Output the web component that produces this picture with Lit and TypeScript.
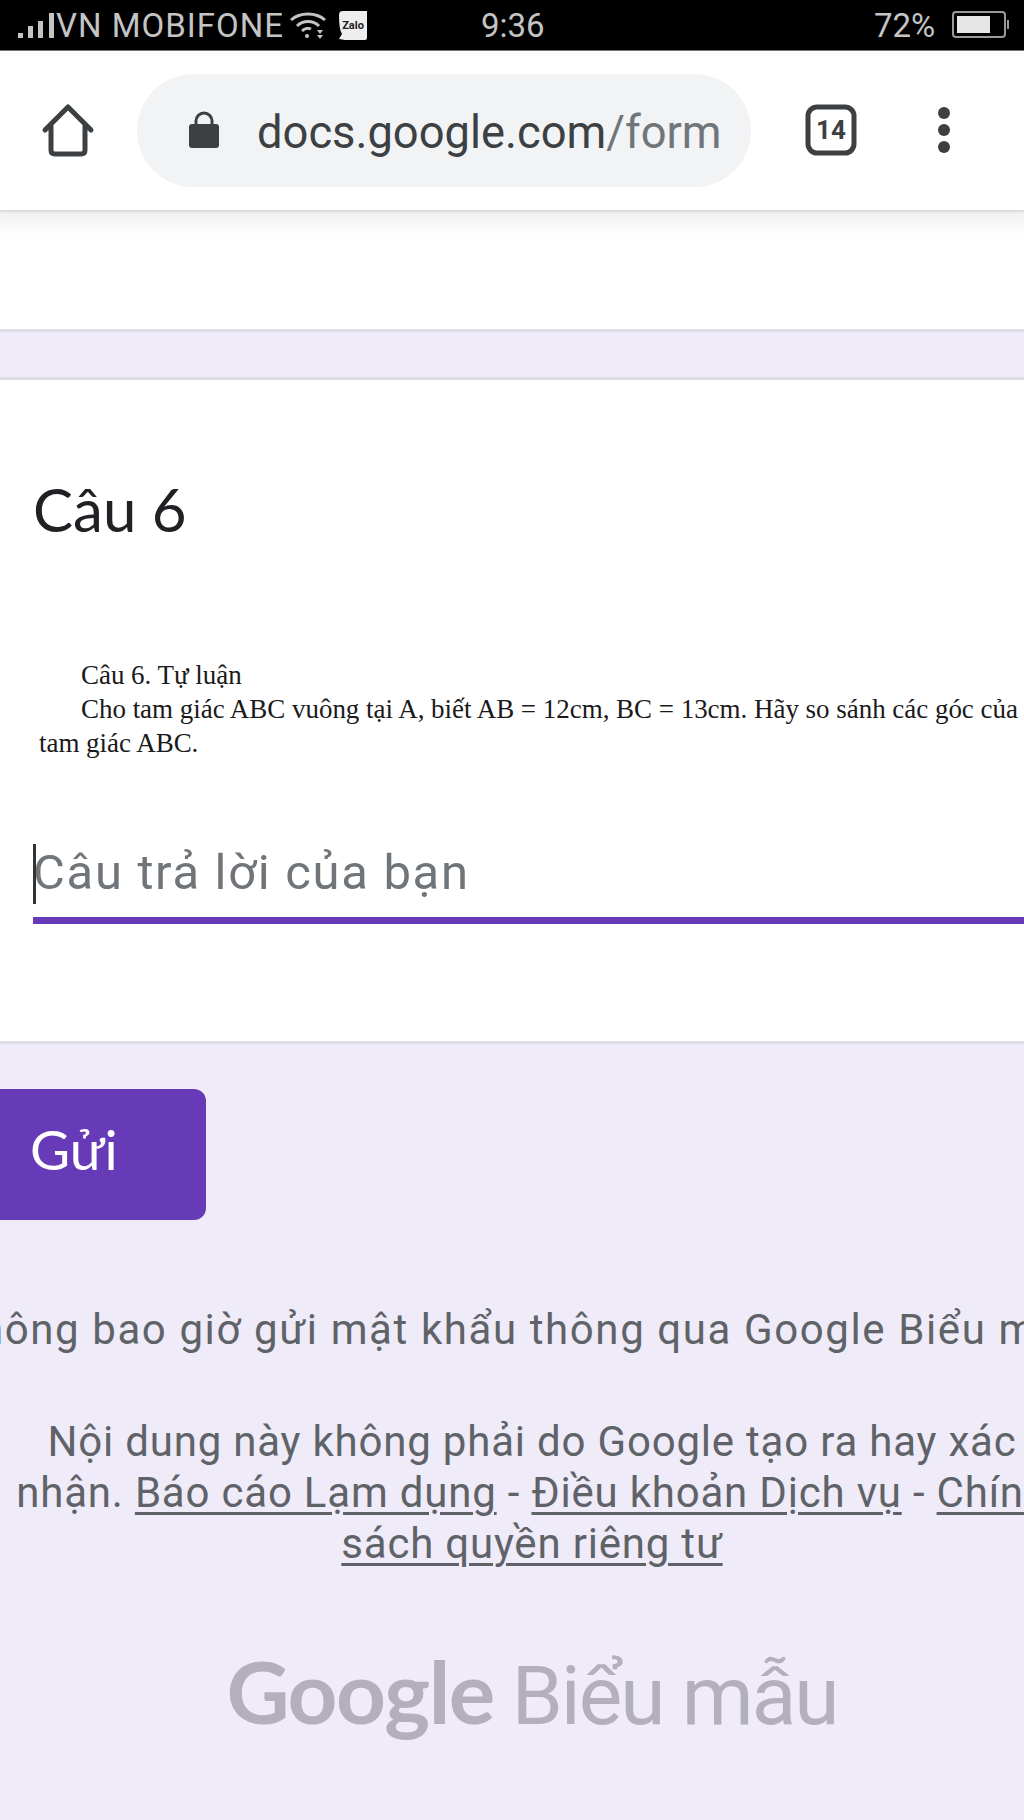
import {LitElement, html, css} from 'lit';
import {customElement} from 'lit/decorators.js';

@customElement('app-root')
export class AppRoot extends LitElement {
  static styles = css`
    :host {
      display: block;
      width: 1024px;
      height: 1820px;
      overflow: hidden;
      background: #efebf9;
      font-family: Roboto, "Noto Sans", sans-serif;
    }
    .status {
      height: 51px;
      background: #000;
      color: #c4c4c4;
      display: flex;
      align-items: center;
      font-size: 33px;
      line-height: 51px;
      border-bottom: 1px solid #777;
      box-sizing: border-box;
      padding-left: 17px;
    }
    .status svg { display: block; flex: none; }
    .carrier { width: 232px; margin-left: -2px; padding-right: 2px; white-space: nowrap; letter-spacing: 1px; }
    .zalo { margin-left: 12px; }
    .time { margin-left: 113px; width: 393px; }
    .pct { width: 78px; }
    .toolbar {
      height: 159px;
      background: #fff;
      display: flex;
      align-items: center;
      color: #3c4043;
      box-shadow: 0 2px 2px #d8d8d8;
      position: relative;
      box-sizing: border-box;
      padding: 0 0 1px 41px;
    }
    .toolbar svg { display: block; flex: none; }
    .pill {
      width: 614px;
      height: 113px;
      margin-left: 42px;
      border-radius: 57px;
      background: #f1f3f4;
      display: flex;
      align-items: center;
      box-sizing: border-box;
      padding-left: 52px;
      font-size: 45.3px;
      white-space: nowrap;
      overflow: hidden;
    }
    .url { margin-left: 38px; padding-top: 4px; }
    .url span { color: #70757a; }
    .tabs { margin-left: 54px; }
    .dots { margin-left: 80px; }
    .fade {
      height: 119px;
      background: linear-gradient(#f0f0f0, #fff 26px);
      border-bottom: 3px solid #dfdce8;
    }
    .band { height: 45px; }
    .card {
      background: #fff;
      border-top: 3px solid #dfdce8;
      border-bottom: 3px solid #dfdce8;
      height: 667px;
      box-sizing: border-box;
      padding: 96px 0 0 33px;
    }
    .title {
      font-family: Lato, "Noto Sans", sans-serif;
      font-size: 60px;
      line-height: 66px;
      color: #202124;
    }
    .doc {
      margin: 116px 0 0 6px;
      font-family: "Liberation Serif", serif;
      font-size: 27px;
      line-height: 34px;
      color: #1a1a1a;
      white-space: nowrap;
      letter-spacing: -0.03px;
    }
    .doc div:not(:last-child) { text-indent: 42px; }
    .answer {
      margin-top: 81px;
      height: 83px;
      padding-top: 1px;
      font-size: 49px;
      line-height: 62px;
      color: #70757a;
      letter-spacing: 1.67px;
      border-bottom: 7px solid #673ab7;
      box-sizing: border-box;
      position: relative;
    }
    .answer i {
      position: absolute;
      left: 0;
      top: 3px;
      width: 3px;
      height: 60px;
      background: #333;
    }
    .send {
      width: 206px;
      height: 131px;
      margin-top: 45px;
      background: #673ab7;
      border-radius: 0 12px 12px 0;
      color: #fff;
      font-family: Lato, "Noto Sans", sans-serif;
      font-size: 55px;
      line-height: 121px;
      box-sizing: border-box;
      padding-left: 30px;
    }
    .foot {
      width: 1064px;
      text-align: center;
      color: #5f6368;
      font-size: 42px;
      letter-spacing: 0.8px;
      white-space: nowrap;
    }
    .warn { margin: 84px 0 0 -48px; width: 1200px; text-align: left; line-height: 52px; letter-spacing: 1.6px; }
    .legal { margin-top: 60px; line-height: 51px; }
    .legal u { text-underline-offset: 5px; text-decoration-thickness: 3px; }
    .brand {
      width: 1064px;
      margin-top: 72px;
      display: flex;
      justify-content: center;
      align-items: baseline;
      color: #b3b0bb;
      line-height: 100px;
      white-space: nowrap;
    }
    .g { font-family: Lato, "Noto Sans", sans-serif; font-weight: 700; font-size: 87px; letter-spacing: -1.5px; }
    .f { margin-left: 18px; font-size: 82px; letter-spacing: -2px; }
  `;

  override render() {
    return html`
      <div class="status">
        <svg width="41" height="28" viewBox="0 0 41 28" fill="#c4c4c4">
          <rect x="1" y="22" width="5" height="5"/><rect x="11" y="15" width="5" height="12"/>
          <rect x="21" y="10" width="5" height="17"/><rect x="32" y="2" width="5" height="25"/>
        </svg>
        <span class="carrier">VN MOBIFONE</span>
        <svg width="36" height="30" viewBox="0 0 36 30" fill="none" stroke="#c4c4c4" stroke-width="3">
          <path d="M1 10C10 2 26 2 35 10"/><path d="M7 16C13 10 23 10 29 16"/><path d="M12 21C15 18 19 18 21 19"/>
          <circle cx="17" cy="26" r="2" fill="#c4c4c4" stroke="none"/>
          <path d="M27 20H33L30 24ZM27 25H33L30 29Z" fill="#c4c4c4" stroke="none"/>
        </svg>
        <svg class="zalo" width="30" height="31" viewBox="0 0 30 31">
          <path d="M5 1H29V28Q29 30 27 30H7L1 29L4 24Q1 20 1 5Q1 1 5 1Z" fill="#eee"/>
          <text x="15" y="19" font-size="11" font-family="Roboto" font-weight="700" text-anchor="middle" fill="#222">Zalo</text>
        </svg>
        <span class="time">9:36</span>
        <span class="pct">72%</span>
        <svg width="57" height="28" viewBox="0 0 57 28">
          <rect x="1" y="1" width="52" height="25" rx="3" fill="none" stroke="#999" stroke-width="2"/>
          <rect x="5" y="5" width="33" height="17" fill="#e6e6e6"/>
          <rect x="55" y="9" width="2" height="9" fill="#999"/>
        </svg>
      </div>
      <div class="toolbar">
        <svg width="54" height="54" viewBox="0 0 54 54" fill="none" stroke="#3c4043" stroke-width="5" stroke-linejoin="round" stroke-linecap="round">
          <path d="M4 27L27 4L50 27M10 21V47Q10 51 14 51H40Q44 51 44 47V21"/>
        </svg>
        <div class="pill">
          <svg width="30" height="38" viewBox="0 0 30 38" fill="#3c4043">
            <path d="M7 14V10a8 8 0 0 1 16 0v4" fill="none" stroke="#3c4043" stroke-width="3"/>
            <rect y="13" width="30" height="24" rx="3"/>
          </svg>
          <div class="url">docs.google.com<span>/form</span></div>
        </div>
        <svg class="tabs" width="52" height="52" viewBox="0 0 52 52">
          <rect x="3" y="3" width="46" height="46" rx="9" fill="none" stroke="#3c4043" stroke-width="5"/>
          <text x="26" y="35" font-size="26" font-family="Roboto" font-weight="700" text-anchor="middle" fill="#3c4043">14</text>
        </svg>
        <svg class="dots" width="14" height="46" viewBox="0 0 14 46" fill="#3c4043">
          <circle cx="7" cy="6" r="6"/><circle cx="7" cy="23" r="6"/><circle cx="7" cy="40" r="6"/>
        </svg>
      </div>
      <div class="fade"></div>
      <div class="band"></div>
      <div class="card">
        <div class="title">Câu 6</div>
        <div class="doc">
          <div>Câu 6. Tự luận</div>
          <div>Cho tam giác ABC vuông tại A, biết AB = 12cm, BC = 13cm. Hãy so sánh các góc của</div>
          <div>tam giác ABC.</div>
        </div>
        <div class="answer"><i></i>Câu trả lời của bạn</div>
      </div>
      <div class="send">Gửi</div>
      <div class="foot warn">Không bao giờ gửi mật khẩu thông qua Google Biểu mẫu.</div>
      <div class="foot legal">
        <div>Nội dung này không phải do Google tạo ra hay xác</div>
        <div>nhận. <u>Báo cáo Lạm dụng</u> - <u>Điều khoản Dịch vụ</u> - <u>Chính</u></div>
        <div><u>sách quyền riêng tư</u></div>
      </div>
      <div class="brand"><span class="g">Google</span><span class="f">Biểu mẫu</span></div>
    `;
  }
}
